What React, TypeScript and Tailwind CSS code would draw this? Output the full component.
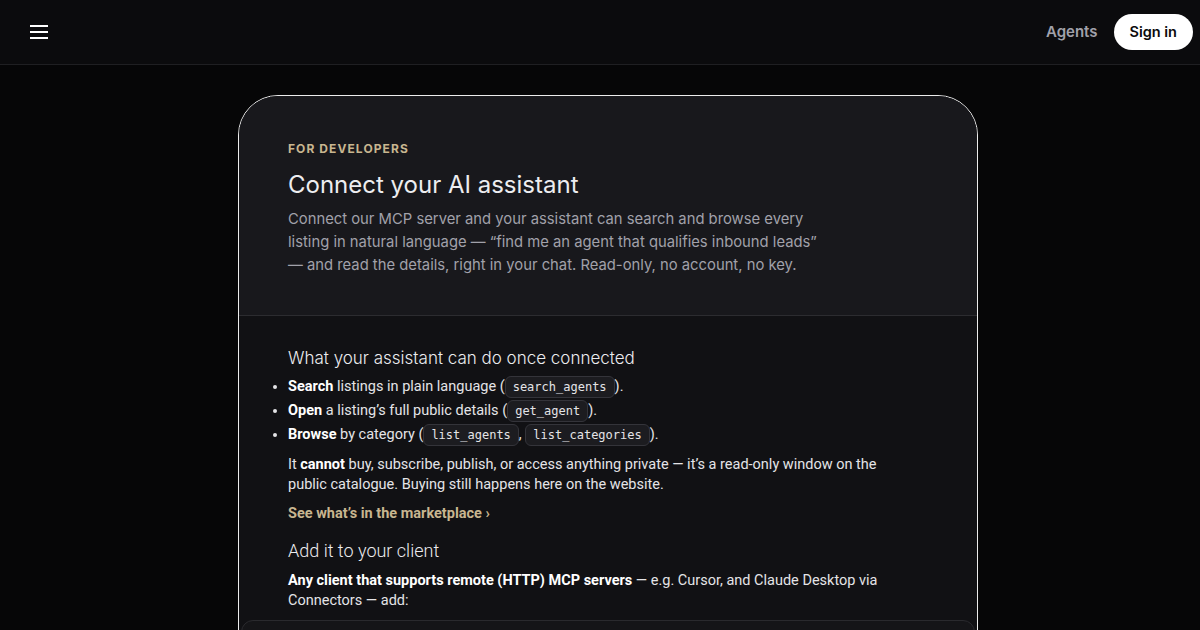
import React from "react";

const inter = "font-['Inter','Noto_Sans',sans-serif]";
const roboto = "font-['Roboto','Liberation_Sans',sans-serif]";

function Code({ children }: { children: React.ReactNode }) {
  return (
    <code className="inline-block rounded-[6px] border border-[#34343a] bg-[#1c1c20] px-[7px] font-['DejaVu_Sans_Mono',monospace] text-[12px] leading-[20px] text-[#e4e4e7] align-middle">
      {children}
    </code>
  );
}

function Menu() {
  return (
    <svg width="18" height="14" viewBox="0 0 18 14" fill="none">
      <rect x="0" y="0" width="18" height="2" fill="#fff" />
      <rect x="0" y="6" width="18" height="2" fill="#fff" />
      <rect x="0" y="12" width="18" height="2" fill="#fff" />
    </svg>
  );
}

export default function App() {
  return (
    <div className={`h-[630px] w-[1200px] overflow-hidden bg-[#060607] ${inter}`}>
      <header className="flex h-[65px] items-center justify-between border-b border-[#1f1f22] bg-[#0b0b0d] pl-[30px] pr-[7px]">
        <button className="flex h-[18px] items-center">
          <Menu />
        </button>
        <nav className="flex items-center gap-[16px]">
          <span className="text-[15px] font-semibold text-[#a1a1aa]">Agents</span>
          <span className="flex h-[36px] items-center rounded-full bg-white px-[16px] text-[14.5px] font-semibold text-[#0b0b0d]">
            Sign in
          </span>
        </nav>
      </header>

      <main className="pl-[16px] pt-[30px]">
        <section className="mx-auto w-[740px] overflow-hidden rounded-[40px] border border-[#ececec] bg-[#111114]">
          <div className="border-b border-[#2c2c30] bg-[#18181c] px-[49px] pb-[38px] pt-[45px]">
            <div className="text-[12px] font-bold leading-[16px] tracking-[0.09em] text-[#c8b690]">
              FOR DEVELOPERS
            </div>
            <h1 className="mt-[12px] text-[24px] font-normal leading-[32px] text-[#ededf0]">
              Connect your AI assistant
            </h1>
            <p className="mt-[7px] max-w-[540px] text-[14.8px] leading-[23px] text-[#a1a1aa]">
              Connect our MCP server and your assistant can search and browse every listing in natural
              language — “find me an agent that qualifies inbound leads” — and read the details, right in
              your chat. Read-only, no account, no key.
            </p>
          </div>

          <div className="px-[49px] pt-[28px]">
            <h2 className="text-[17px] font-light leading-[28px] text-[#ececef]">
              What your assistant can do once connected
            </h2>
            <ul className={`mt-[3px] list-outside list-disc pl-0 text-[14.5px] leading-[24px] text-[#e4e4e7] ${roboto}`}>
              <li>
                <b className="font-bold text-white">Search</b> listings in plain language (
                <Code>search_agents</Code>).
              </li>
              <li>
                <b className="font-bold text-white">Open</b> a listing’s full public details (
                <Code>get_agent</Code>).
              </li>
              <li>
                <b className="font-bold text-white">Browse</b> by category (<Code>list_agents</Code>,{" "}
                <Code>list_categories</Code>).
              </li>
            </ul>
            <p className={`mt-[8px] max-w-[610px] text-[14.5px] leading-[20px] text-[#e4e4e7] ${roboto}`}>
              It <b className="font-bold text-white">cannot</b> buy, subscribe, publish, or access anything
              private — it’s a read-only window on the public catalogue. Buying still happens here on the
              website.
            </p>
            <div className={`mt-[9px] text-[14.5px] font-bold leading-[20px] text-[#c8b690] ${roboto}`}>
              See what’s in the marketplace ›
            </div>
            <h2 className={`mt-[13px] text-[18px] font-light leading-[28px] text-[#ececef] ${roboto}`}>
              Add it to your client
            </h2>
            <p className={`mt-[6px] max-w-[610px] text-[14.5px] leading-[20px] text-[#e4e4e7] ${roboto}`}>
              <b className="font-bold text-white">Any client that supports remote (HTTP) MCP servers</b> —
              e.g. Cursor, and Claude Desktop via Connectors — add:
            </p>
          </div>
          <div className="mx-[2px] mt-[9px] h-[80px] rounded-[12px] border border-[#2a2a2e] bg-[#151518]" />
        </section>
      </main>
    </div>
  );
}
